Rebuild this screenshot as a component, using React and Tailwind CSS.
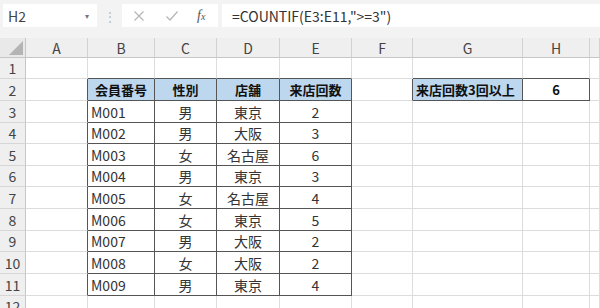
import React from 'react';

const FONT = { fontFamily: '"Noto Sans CJK JP", "Noto Sans", sans-serif' };

const cols = ['A', 'B', 'C', 'D', 'E', 'F', 'G', 'H', ''];
const widths = 'grid-cols-[26px_62px_67px_62px_63px_72px_61px_110px_67px_1fr]';
const heights = ['h-[21px]', 'h-[22px]', 'h-[22px]', 'h-[21px]', 'h-[22px]', 'h-[21px]', 'h-[22px]', 'h-[22px]', 'h-[21px]', 'h-[22px]', 'h-[22px]', 'h-[21px]'];

const members = [
  ['M001', '男', '東京', '2'],
  ['M002', '男', '大阪', '3'],
  ['M003', '女', '名古屋', '6'],
  ['M004', '男', '東京', '3'],
  ['M005', '女', '名古屋', '4'],
  ['M006', '女', '東京', '5'],
  ['M007', '男', '大阪', '2'],
  ['M008', '女', '大阪', '2'],
  ['M009', '男', '東京', '4'],
];

// 行ごとのセル内容 (A..I)
function rowCells(r) {
  const cells = Array(9).fill(null);
  if (r === 2) {
    cells[1] = { t: '会員番号', head: true };
    cells[2] = { t: '性別', head: true };
    cells[3] = { t: '店舗', head: true };
    cells[4] = { t: '来店回数', head: true };
    cells[6] = { t: '来店回数3回以上', head: true, left: true };
    cells[7] = { t: '6', bold: true };
  } else if (r >= 3 && r <= 11) {
    const m = members[r - 3];
    cells[1] = { t: m[0], left: true };
    cells[2] = { t: m[1] };
    cells[3] = { t: m[2] };
    cells[4] = { t: m[3] };
  }
  return cells;
}

function inTable(r, c) {
  if (r >= 2 && r <= 11 && c >= 1 && c <= 4) return true;
  if (r === 2 && (c === 6 || c === 7)) return true;
  return false;
}

function Cell({ r, c }) {
  const cell = rowCells(r)[c];
  const boxed = inTable(r, c);
  const darkRight = boxed || inTable(r, c + 1);
  const darkBottom = boxed || inTable(r + 1, c);
  const blue = cell && cell.head;
  return (
    <div
      className={
        heights[r - 1] +
        ' flex items-center overflow-hidden whitespace-nowrap border-r border-b leading-none ' +
        (darkRight ? 'border-r-[#555] ' : 'border-r-[#dcdcdc] ') +
        (darkBottom ? 'border-b-[#555] ' : 'border-b-[#dcdcdc] ') +
        (blue ? 'bg-[#bdd7ee] ' : 'bg-white ') +
        (cell && cell.left ? 'justify-start pl-[3px] ' : 'justify-center ') +
        (cell && (cell.head || cell.bold) ? 'font-bold text-[13px] text-[#111] ' : 'text-[14px] text-[#333] ')
      }
    >
      {cell ? cell.t : ''}
    </div>
  );
}

export default function App() {
  const rows = Array.from({ length: 12 }, (_, i) => i + 1);
  return (
    <div className="w-[600px] h-[308px] overflow-hidden bg-[#f3f3f3]" style={FONT}>
      {/* 数式バー */}
      <div className="h-[38px] flex items-start pt-[4px]">
        <div className="ml-[3px] w-[94px] h-[23px] bg-white flex items-center justify-between pl-[5px] pr-[8px] text-[14px] text-[#444] leading-none">
          <span>H2</span>
          <span className="text-[8px] text-[#777]">▾</span>
        </div>
        <div className="w-[25px] h-[23px] flex items-center justify-center text-[12px] text-[#bbb]">⋮</div>
        <div className="w-[96px] h-[23px] bg-white flex items-center pl-[11px] text-[#aaa]">
          <svg width="12" height="12" viewBox="0 0 12 12" className="mr-[20px]">
            <path d="M1.5 1.5 L10.5 10.5 M10.5 1.5 L1.5 10.5" stroke="#b5b5b5" strokeWidth="1.2" fill="none" />
          </svg>
          <svg width="14" height="12" viewBox="0 0 14 12" className="mr-[18px]">
            <path d="M1.5 6.5 L5 10 L12.5 1.5" stroke="#b5b5b5" strokeWidth="1.2" fill="none" />
          </svg>
          <span className="italic text-[14px] text-[#555]" style={{ fontFamily: '"Liberation Serif", serif' }}>
            f<span className="text-[10px]">x</span>
          </span>
        </div>
        <div className="ml-[4px] flex-1 h-[23px] bg-white flex items-center pl-[10px] text-[14px] text-[#333] leading-none">
          =COUNTIF(E3:E11,"&gt;=3")
        </div>
      </div>

      {/* シート */}
      <div className={'grid ' + widths}>
        {/* 列見出し */}
        <div className="h-[20px] bg-[#e9e9e9] border-r border-b border-[#c6c6c6] relative">
          <svg width="14" height="14" viewBox="0 0 14 14" className="absolute right-[2px] bottom-[2px]">
            <path d="M14 0 L14 14 L0 14 Z" fill="#b4b4b4" />
          </svg>
        </div>
        {cols.map((c, i) => (
          <div
            key={i}
            className="h-[20px] bg-[#efefef] border-r border-r-[#d2d2d2] border-b border-b-[#c6c6c6] flex items-center justify-center text-[14px] text-[#444] leading-none"
          >
            {c}
          </div>
        ))}

        {rows.map((r) => (
          <React.Fragment key={r}>
            <div
              className={
                heights[r - 1] +
                ' bg-[#efefef] border-r border-r-[#c6c6c6] border-b border-b-[#d6d6d6] flex items-center justify-center text-[14px] text-[#444] leading-none'
              }
            >
              {r}
            </div>
            {cols.map((_, c) => (
              <Cell key={c} r={r} c={c} />
            ))}
          </React.Fragment>
        ))}
      </div>
    </div>
  );
}
